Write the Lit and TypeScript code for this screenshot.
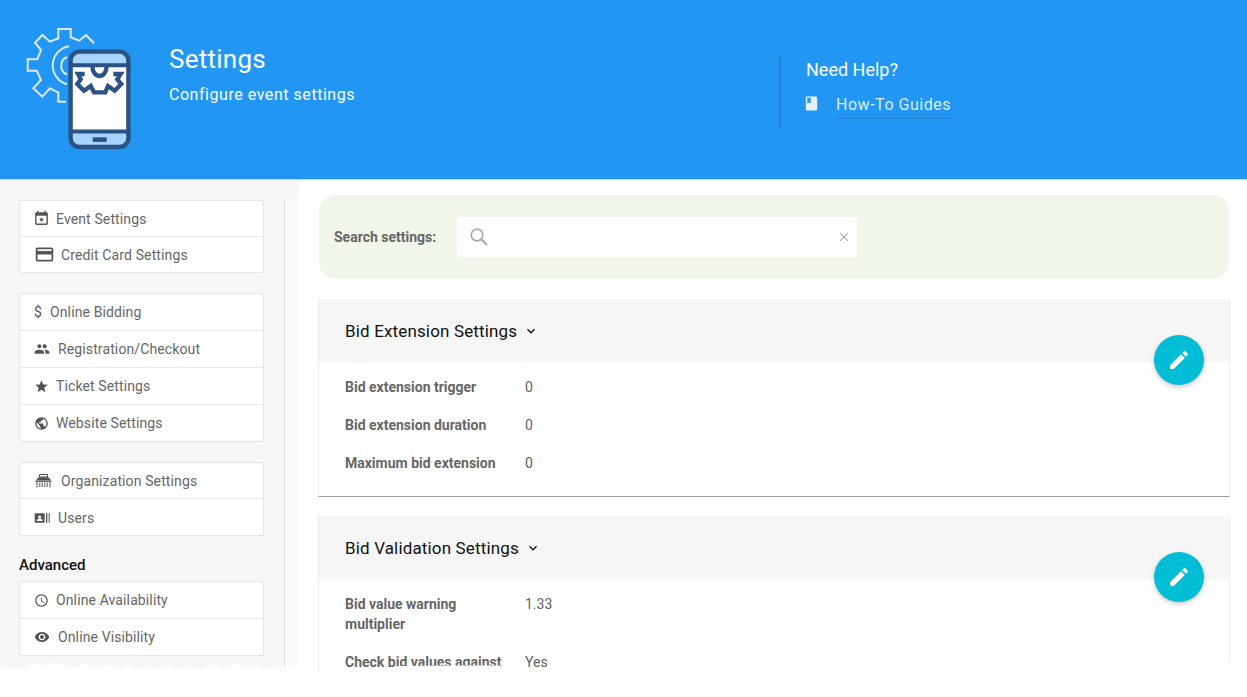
import { LitElement, html, css, svg } from "lit";
import { customElement } from "lit/decorators.js";

const i = (d: string, cls = "ic") => html`<svg class=${cls} viewBox="0 0 24 24" fill="currentColor"><path d=${d}></path></svg>`;
const P = {
  eventStar: "M19 3h-1V1h-2v2H8V1H6v2H5c-1.11 0-2 .9-2 2v14c0 1.1.89 2 2 2h14c1.1 0 2-.9 2-2V5c0-1.1-.9-2-2-2zm0 16H5V8h14v11zm-7-9.2 1 2.4 2.6.2-2 1.7.6 2.5-2.2-1.4-2.2 1.4.6-2.5-2-1.7 2.6-.2z",
  card: "M20 4H4c-1.11 0-1.99.89-1.99 2L2 18c0 1.11.89 2 2 2h16c1.11 0 2-.89 2-2V6c0-1.11-.89-2-2-2zm0 14H4v-6h16v6zm0-10H4V6h16v2z",
  people: "M16 11c1.66 0 2.99-1.34 2.99-3S17.66 5 16 5s-3 1.34-3 3 1.34 3 3 3zm-8 0c1.66 0 2.99-1.34 2.99-3S9.66 5 8 5 5 6.34 5 8s1.34 3 3 3zm0 2c-2.33 0-7 1.17-7 3.5V19h14v-2.5C15 14.17 10.33 13 8 13zm8 0c-.29 0-.62.02-.97.05 1.16.84 1.97 1.97 1.97 3.45V19h6v-2.5c0-2.33-4.67-3.5-7-3.5z",
  star: "M12 17.27 18.18 21l-1.64-7.03L22 9.24l-7.19-.61L12 2 9.19 8.63 2 9.24l5.46 4.73L5.82 21z",
  globe: "M12 2C6.48 2 2 6.48 2 12s4.48 10 10 10 10-4.48 10-10S17.52 2 12 2zm-1 17.93c-3.95-.49-7-3.85-7-7.93 0-.62.08-1.21.21-1.79L9 15v1c0 1.1.9 2 2 2v1.93zm6.9-2.54c-.26-.81-1-1.39-1.9-1.39h-1v-3c0-.55-.45-1-1-1H8v-2h2c.55 0 1-.45 1-1V7h2c1.1 0 2-.9 2-2v-.41c2.93 1.19 5 4.06 5 7.41 0 2.08-.8 3.97-2.1 5.39z",
  users: "M2 5h13c.55 0 1 .45 1 1v12c0 .55-.45 1-1 1H2c-.55 0-1-.45-1-1V6c0-.55.45-1 1-1zm6.5 3.2a2.3 2.3 0 1 0 0 4.6 2.3 2.3 0 0 0 0-4.6zM4 16.5h9v-1c0-1.5-3-2.3-4.5-2.3S4 14 4 15.5zM18 5h2v14h-2zM22 5h1.5v14H22z",
  clock: "M11.99 2C6.47 2 2 6.48 2 12s4.47 10 9.99 10C17.52 22 22 17.52 22 12S17.52 2 11.99 2zM12 20c-4.42 0-8-3.58-8-8s3.58-8 8-8 8 3.58 8 8-3.58 8-8 8zm.5-13H11v6l5.25 3.15.75-1.23-4.5-2.67z",
  eye: "M12 4.5C7 4.5 2.73 7.61 1 12c1.73 4.39 6 7.5 11 7.5s9.27-3.11 11-7.5c-1.73-4.39-6-7.5-11-7.5zM12 17c-2.76 0-5-2.24-5-5s2.24-5 5-5 5 2.24 5 5-2.24 5-5 5zm0-8c-1.66 0-3 1.34-3 3s1.34 3 3 3 3-1.34 3-3-1.34-3-3-3z",
  edit: "M3 17.25V21h3.75L17.81 9.94l-3.75-3.75L3 17.25zM20.71 7.04c.39-.39.39-1.02 0-1.41l-2.34-2.34c-.39-.39-1.02-.39-1.41 0l-1.83 1.83 3.75 3.75 1.83-1.83z",
  chevron: "M7.41 8.59 12 13.17l4.59-4.58L18 10l-6 6-6-6z",
  book: "M18 2H6c-1.1 0-2 .9-2 2v16c0 1.1.9 2 2 2h12c1.1 0 2-.9 2-2V4c0-1.1-.9-2-2-2zM6 4h5v8l-2.5-1.5L6 12V4z",
};

const gearIcon = svg`
<svg class="logo" viewBox="0 0 110 124" fill="none">
  <path d="M68 16.3 L60 8 L53.3 13.7 L44.7 10.3 L44.7 2 L32.3 2 L32.3 11.3 L24 14.7 L16.3 8 L9 15.7 L15 23 L11.3 32.3 L1.7 32.3 L1.7 43.7 L10.7 43.7 L15 53 L7.3 61.3 L16.3 69.7 L24 61.3 L32.3 65.7 L32.3 74.7 L40 74.7" stroke="#dfe8ef" stroke-width="2"></path>
  <path d="M43 19.2 A 19.5 19.5 0 0 0 41 57.2" stroke="#dfe8ef" stroke-width="2"></path>
  <path d="M41 30 A 9.5 9.5 0 0 0 41 47.5" stroke="#dfe8ef" stroke-width="2"></path>
  <rect x="44.6" y="24.6" width="57.8" height="95.4" rx="9" fill="#fff"></rect>
  <path d="M44.6 38.3 V33.6 a9 9 0 0 1 9-9 H93.4 a9 9 0 0 1 9 9 V38.3 Z" fill="#a6d3ff"></path>
  <path d="M44.6 104.6 H102.4 V111 a9 9 0 0 1 -9 9 H53.6 a9 9 0 0 1 -9-9 Z" fill="#a6d3ff"></path>
  <rect x="44.6" y="24.6" width="57.8" height="95.4" rx="9" stroke="#2a5284" stroke-width="4.4"></rect>
  <path d="M44.6 38.3 H102.4 M44.6 104.6 H102.4" stroke="#2a5284" stroke-width="4"></path>
  <rect x="66.7" y="110.3" width="14" height="4.6" fill="#2a5284"></rect>
  <path d="M66.5 40 A 7 9 0 0 0 80.5 40" stroke="#2a5284" stroke-width="4.3"></path>
  <path d="M58.7 47 L52 47 L54.7 52.3 L51.3 57 L58 63.7 L64.7 59 L68 65.3 L79.3 65.3 L82 59 L88.7 63.7 L95.3 57 L91.3 52.3 L94.7 47 L87.3 47" stroke="#2a5284" stroke-width="4.3" stroke-linejoin="miter"></path>
</svg>`;

const groups: { icon: string; label: string; cls?: string; dollar?: boolean }[][] = [
  [
    { icon: P.eventStar, label: "Event Settings", cls: "evt" },
    { icon: P.card, label: "Credit Card Settings", cls: "wide" },
  ],
  [
    { icon: "", label: "Online Bidding", dollar: true },
    { icon: P.people, label: "Registration/Checkout", cls: "mid" },
    { icon: P.star, label: "Ticket Settings" },
    { icon: P.globe, label: "Website Settings" },
  ],
  [
    { icon: "org", label: "Organization Settings", cls: "wide" },
    { icon: P.users, label: "Users", cls: "mid tallish" },
  ],
];
const advanced = [
  { icon: P.clock, label: "Online Availability" },
  { icon: P.eye, label: "Online Visibility", cls: "mid" },
];

const orgIcon = html`<svg class="org" viewBox="0 0 17 14" fill="none" stroke="currentColor"><path d="M4.5.5h8v2.5h-8z" stroke-width="1"></path><path d="M1 6.2 L3.5 3.2 H13.5 L16 6.2 Z" fill="currentColor" stroke="none"></path><path d="M.5 6.5h16v1.4H.5z" fill="currentColor" stroke="none"></path><path d="M2 8V13.5M4.8 8.5V13M7.2 8.5V13M9.8 8.5V13M12.2 8.5V13M15 8V13.5" stroke-width="1"></path></svg>`;

const item = (it: any) => html`<div class="item ${it.cls || ""}">
  ${it.dollar ? html`<span class="dollar">$</span>` : it.icon === "org" ? orgIcon : i(it.icon)}
  <span>${it.label}</span>
</div>`;

// Jagged lower edge of the captured page, in overlay coordinates (overlay top = y 655).
const edgePoints: [number, number][] = [
  [0, 13], [8, 12], [15, 15], [24, 14], [30, 10], [38, 8], [44, 11], [52, 7], [60, 9], [66, 13],
  [76, 12], [84, 8], [92, 12], [98, 14], [108, 10], [118, 13], [128, 11], [136, 14], [148, 12],
  [158, 15], [170, 11], [178, 14], [190, 12], [202, 15], [214, 10], [224, 13], [236, 9], [246, 13],
  [258, 11], [270, 14], [282, 12], [298, 10], [318, 16], [345, 16], [376, 15], [385, 13], [400, 11],
  [450, 10.5], [500, 10.5], [505, 16], [560, 17], [1100, 17], [1228, 8], [1247, 8],
];
const edge = `M${edgePoints.map(([x, y]) => `${x} ${y}`).join("L")}L1247 42L0 42Z`;

@customElement("app-root")
export class AppRoot extends LitElement {
  static styles = css`
    :host {
      display: block;
      position: relative;
      height: 697px;
      overflow: hidden;
      background: #fff;
      font-family: Roboto, "Liberation Sans", sans-serif;
      color: #616161;
    }
    .header {
      height: 179px;
      background: #2196f3;
      border-bottom: 1px solid #bcdcf6;
      box-sizing: content-box;
      display: flex;
      color: #fff;
    }
    .logo { width: 110px; height: 124px; margin: 27px 0 0 26px; flex: none; }
    .titles { width: 610px; margin-left: 33px; flex: none; }
    h1 { font-size: 26px; font-weight: 400; line-height: 30px; margin: 44px 0 0; letter-spacing: .25px; }
    .sub { font-size: 16px; line-height: 20px; margin-top: 11px; letter-spacing: .54px; }
    .help { margin-top: 56px; height: 71px; border-left: 2px solid #1e7fcc; padding-left: 25px; }
    .help h2 { font-size: 18px; font-weight: 400; line-height: 22px; margin: 3px 0 0; }
    .guide { display: flex; align-items: flex-start; margin-top: 14px; color: #dceefc; font-size: 16px; }
    .guide svg { width: 17px; height: 17px; margin: 0 16px 0 -3px; color: #e6f2fd; flex: none; }
    .guide span { padding-bottom: 3px; border-bottom: 1px dotted #0f6fbd; line-height: 20px; letter-spacing: .53px; }
    .body { display: flex; height: 517px; }
    .side { width: 298px; flex: none; background: #f7f7f7; display: flex; box-sizing: border-box; padding-top: 20px; }
    .col { width: 285px; box-sizing: border-box; padding: 0 20px 0 19px; border-right: 1px solid #e4e4e4; flex: none; }
    .rest { flex: 1; background: #fafafa; }
    .group { background: #fff; border: 1px solid #e6e6e6; border-radius: 2px; margin-bottom: 20px; }
    .group.tall .item { height: 36px; }
    .item { height: 35px; display: flex; align-items: center; padding-left: 14px; font-size: 14px; letter-spacing: .12px; color: #666; border-top: 1px solid #e8e8e8; }
    .item:first-child { border-top: 0; }
    .item.tallish { height: 36px; padding-top: 1px; box-sizing: border-box; height: 37px; }
    .ic { width: 15px; height: 15px; color: #555; margin-right: 7px; flex: none; }
    .item.evt .ic { width: 17px; height: 17px; margin: 0 6px 0 -1px; }
    .item.wide .ic { width: 21px; height: 21px; margin-right: 6px; }
    .item.mid .ic { width: 16px; height: 16px; margin-right: 8px; }
    .org { width: 17px; height: 14px; margin: 0 9px 0 1px; color: #555; flex: none; }
    .dollar { width: 8px; margin-right: 8px; color: #555; font-size: 14px; }
    .adv { font-size: 15px; font-weight: 500; line-height: 20px; color: #111; margin: -1px 0 6px; }
    .main { flex: 1; min-width: 0; padding: 15px 17px 0 20px; }
    .search { height: 84px; margin: 0 1px; border-radius: 16px; background: #f0f6e9; display: flex; align-items: center; padding-left: 15px; }
    .search label { width: 123px; font-size: 14px; font-weight: 700; color: #666; flex: none; }
    .input { width: 400px; height: 40px; background: #fff; border-radius: 2px; display: flex; align-items: center; justify-content: space-between; padding: 0 8px 0 13px; box-sizing: border-box; }
    .input svg { display: block; }
    .card { position: relative; background: #fff; border: 1px solid #ededed; border-top: 0; border-bottom: 1px solid #9e9e9e; margin-top: 20px; padding-bottom: 14px; }
    .card + .card { margin-top: 19px; border-bottom: 0; }
    .card-h { height: 63px; background: #f6f6f6; display: flex; align-items: center; padding-left: 26px; font-size: 17px; color: #111; letter-spacing: .15px; }
    .card-h svg { width: 16px; height: 16px; margin-left: 6px; }
    .fab { position: absolute; right: 25px; top: 36px; width: 50px; height: 50px; border-radius: 50%; background: #00bcd4; display: flex; align-items: center; justify-content: center; color: #fff; box-shadow: 0 2px 5px rgba(0,0,0,.22); }
    .fab svg { width: 24px; height: 24px; }
    .rows { padding: 6px 26px 0; }
    .row { display: grid; grid-template-columns: 180px 1fr; font-size: 14px; line-height: 20px; padding: 9px 0; }
    .row b { font-weight: 700; color: #666; width: 160px; }
    .tear { position: absolute; left: 0; top: 655px; width: 1247px; height: 42px; display: block; }
  `;

  private card(title: string, rows: [string, string][]) {
    return html`<div class="card">
      <div class="card-h">${title}${i(P.chevron, "chev")}</div>
      <div class="fab">${i(P.edit, "pen")}</div>
      <div class="rows">
        ${rows.map(([a, b]) => html`<div class="row"><b>${a}</b><span>${b}</span></div>`)}
      </div>
    </div>`;
  }

  render() {
    return html`
      <div class="header">
        ${gearIcon}
        <div class="titles">
          <h1>Settings</h1>
          <div class="sub">Configure event settings</div>
        </div>
        <div class="help">
          <h2>Need Help?</h2>
          <div class="guide">${i(P.book, "bk")}<span>How-To Guides</span></div>
        </div>
      </div>
      <div class="body">
        <div class="side">
          <div class="col">
            ${groups.map((g, n) => html`<div class="group ${n === 1 ? "tall" : ""}">${g.map(item)}</div>`)}
            <div class="adv">Advanced</div>
            <div class="group tall">${advanced.map(item)}</div>
          </div>
          <div class="rest"></div>
        </div>
        <div class="main">
          <div class="search">
            <label>Search settings:</label>
            <div class="input">
              <svg width="18" height="18" viewBox="0 0 18 18" fill="none" stroke="#aaa" stroke-width="1.7"><circle cx="7" cy="7" r="5.8"></circle><path d="M11.2 11.2 17 17" stroke-width="2.2"></path></svg>
              <svg width="10" height="10" viewBox="0 0 10 10" fill="none" stroke="#aaa" stroke-width="1.1"><path d="M1.2 1.2l7.6 7.6M8.8 1.2l-7.6 7.6"></path></svg>
            </div>
          </div>
          ${this.card("Bid Extension Settings", [["Bid extension trigger", "0"], ["Bid extension duration", "0"], ["Maximum bid extension", "0"]])}
          ${this.card("Bid Validation Settings", [["Bid value warning multiplier", "1.33"], ["Check bid values against", "Yes"]])}
        </div>
      </div>
      <svg class="tear" viewBox="0 0 1247 42"><path fill="#fff" d=${edge}></path></svg>
    `;
  }
}
